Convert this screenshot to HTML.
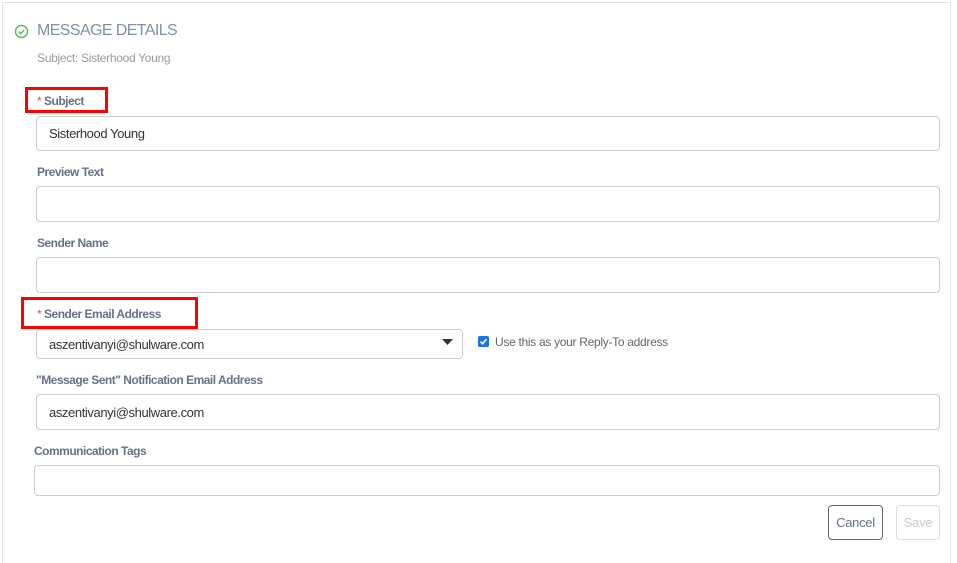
<!DOCTYPE html><html><head><style>
body{margin:0;width:957px;height:552px;background:#fff;font-family:"Liberation Sans",sans-serif;position:relative;overflow:hidden}
.a{position:absolute}
.frame{left:2px;top:2px;width:947px;height:560px;border-left:1px solid #e3e3e3;border-top:1px solid #e3e3e3;border-right:1px solid #e3e3e3}
.lbl{font-size:12px;font-weight:bold;color:#66718a;letter-spacing:-.5px}
.lbl i{color:#e05050;font-style:normal;font-weight:normal}
.in{border:1px solid #cfcfcf;border-radius:4px;box-sizing:border-box;font-size:13px;letter-spacing:-.4px;color:#333;padding-left:12px;display:flex;align-items:center}
.red{border:3px solid #f00;box-sizing:border-box}
.btn{border-radius:4px;box-sizing:border-box;font-size:13px;letter-spacing:-.3px;display:flex;align-items:center;justify-content:center}
</style></head><body>
<div class="a frame"></div>
<svg class="a" style="left:14px;top:24px" width="15" height="15" viewBox="0 0 15 15"><circle cx="7.5" cy="7.5" r="6" fill="none" stroke="#5cb85c" stroke-width="1.4"/><path d="M4.8 7.6l2 2 3.5-3.8" fill="none" stroke="#5cb85c" stroke-width="1.4"/></svg>
<div class="a" style="left:37px;top:22px;font-size:16px;letter-spacing:-.6px;color:#8090a8">MESSAGE DETAILS</div>
<div class="a" style="left:37px;top:51px;font-size:12px;letter-spacing:-.3px;color:#9a9a9a">Subject: Sisterhood Young</div>
<div class="a red" style="left:25px;top:87px;width:83px;height:26px"></div>
<div class="a lbl" style="left:37px;top:94px"><i>* </i>Subject</div>
<div class="a in" style="left:36px;top:116px;width:904px;height:35px">Sisterhood Young</div>
<div class="a lbl" style="left:37px;top:165px">Preview Text</div>
<div class="a in" style="left:36px;top:186px;width:904px;height:36px"></div>
<div class="a lbl" style="left:37px;top:236px">Sender Name</div>
<div class="a in" style="left:36px;top:257px;width:904px;height:36px"></div>
<div class="a red" style="left:21px;top:297px;width:177px;height:32px"></div>
<div class="a lbl" style="left:37px;top:307px"><i>* </i>Sender Email Address</div>
<div class="a in" style="left:36px;top:329px;width:427px;height:30px">aszentivanyi@shulware.com</div>
<svg class="a" style="left:442px;top:338px" width="12" height="8"><path d="M0 1h11L5.5 7z" fill="#333"/></svg>
<div class="a" style="left:478px;top:336px;width:11px;height:11px;background:#1a73e8;border-radius:2px"></div>
<svg class="a" style="left:478px;top:336px" width="11" height="11"><path d="M2.5 5.7l2 2 4-4.5" fill="none" stroke="#fff" stroke-width="1.6"/></svg>
<div class="a" style="left:495px;top:335px;font-size:12px;letter-spacing:-.3px;color:#666">Use this as your Reply-To address</div>
<div class="a lbl" style="left:36px;top:373px">"Message Sent" Notification Email Address</div>
<div class="a in" style="left:36px;top:394px;width:904px;height:36px">aszentivanyi@shulware.com</div>
<div class="a lbl" style="left:34px;top:444px">Communication Tags</div>
<div class="a in" style="left:34px;top:465px;width:906px;height:31px"></div>
<div class="a btn" style="left:828px;top:505px;width:55px;height:35px;border:1px solid #666;color:#66718a">Cancel</div>
<div class="a btn" style="left:896px;top:505px;width:44px;height:35px;border:1px solid #ddd;color:#c8ccd4">Save</div>
</body></html>
